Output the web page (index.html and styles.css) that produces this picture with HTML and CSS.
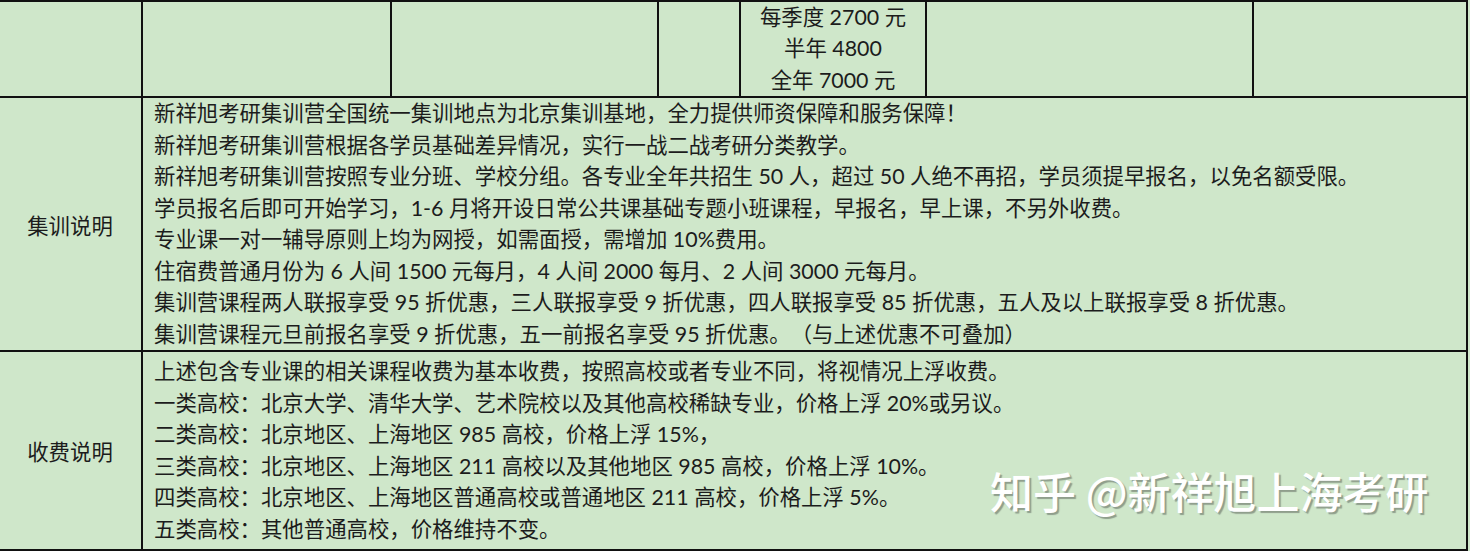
FILE: index.html
```html
<!DOCTYPE html>
<html lang="zh-CN">
<head>
<meta charset="utf-8">
<title>集训说明</title>
<link rel="stylesheet" href="styles.css">
</head>
<body>
<div class="page">
  <table class="fees">
    <colgroup>
      <col class="c1"><col class="c2"><col class="c3"><col class="c4"><col class="c5"><col class="c6"><col class="c7">
    </colgroup>
    <tr class="r-price">
      <td class="first"></td>
      <td></td>
      <td></td>
      <td></td>
      <td class="price"><div>每季度 2700 元</div><div>半年 4800</div><div>全年 7000 元</div></td>
      <td></td>
      <td></td>
    </tr>
    <tr class="r-info">
      <td class="first label">集训说明</td>
      <td colspan="6" class="lines">
        <div>新祥旭考研集训营全国统一集训地点为北京集训基地，全力提供师资保障和服务保障！</div>
        <div>新祥旭考研集训营根据各学员基础差异情况，实行一战二战考研分类教学。</div>
        <div>新祥旭考研集训营按照专业分班、学校分组。各专业全年共招生 50 人，超过 50 人绝不再招，学员须提早报名，以免名额受限。</div>
        <div>学员报名后即可开始学习，1-6 月将开设日常公共课基础专题小班课程，早报名，早上课，不另外收费。</div>
        <div>专业课一对一辅导原则上均为网授，如需面授，需增加 10%费用。</div>
        <div>住宿费普通月份为 6 人间 1500 元每月，4 人间 2000 每月、2 人间 3000 元每月。</div>
        <div>集训营课程两人联报享受 95 折优惠，三人联报享受 9 折优惠，四人联报享受 85 折优惠，五人及以上联报享受 8 折优惠。</div>
        <div>集训营课程元旦前报名享受 9 折优惠，五一前报名享受 95 折优惠。（与上述优惠不可叠加）</div>
      </td>
    </tr>
    <tr class="r-fee">
      <td class="first label">收费说明</td>
      <td colspan="6" class="lines">
        <div>上述包含专业课的相关课程收费为基本收费，按照高校或者专业不同，将视情况上浮收费。</div>
        <div>一类高校：北京大学、清华大学、艺术院校以及其他高校稀缺专业，价格上浮 20%或另议。</div>
        <div>二类高校：北京地区、上海地区 985 高校，价格上浮 15%，</div>
        <div>三类高校：北京地区、上海地区 211 高校以及其他地区 985 高校，价格上浮 10%。</div>
        <div>四类高校：北京地区、上海地区普通高校或普通地区 211 高校，价格上浮 5%。</div>
        <div>五类高校：其他普通高校，价格维持不变。</div>
      </td>
    </tr>
  </table>
  <div class="watermark">知乎 @新祥旭上海考研</div>
</div>
</body>
</html>
```

FILE: styles.css
```css
html, body {
  margin: 0;
  padding: 0;
  background: #cfe7ca;
}
.page {
  position: relative;
  width: 1470px;
  height: 551px;
  overflow: hidden;
  background: #cfe7ca;
}
.fees {
  border-collapse: collapse;
  table-layout: fixed;
  width: 1467px;
  margin-left: -1px;
  margin-top: 0;
  font-family: "Lato", "Noto Sans CJK SC", sans-serif;
  font-size: 21.4px;
  color: #1c1c1c;
  text-spacing-trim: space-all;
}
.c1 { width: 143px; }
.c2 { width: 249px; }
.c3 { width: 267px; }
.c4 { width: 82px; }
.c5 { width: 186px; }
.c6 { width: 327px; }
.c7 { width: 214px; }
.fees td {
  border: 2px solid #111;
  padding: 0;
  vertical-align: top;
  overflow: hidden;
}
.fees td.first {
  border-left: none;
}
.r-price td {
  height: 94px;
}
.price {
  text-align: center;
  line-height: 31.3px;
}
.r-info td {
  height: 252px;
}
.r-fee td {
  height: 193px;
}
.label {
  text-align: center;
  vertical-align: middle !important;
}
.lines {
  padding: 0 0 0 11px !important;
  line-height: 31.5px;
  white-space: nowrap;
}
.r-fee .lines {
  padding-top: 4px !important;
}
.watermark {
  position: absolute;
  left: 990px;
  top: 464px;
  font-family: "Noto Sans CJK SC", sans-serif;
  font-size: 43px;
  font-weight: 500;
  color: #ffffff;
  text-shadow: 2px 2px 1px #8f9e8c;
  white-space: nowrap;
  line-height: 52px;
}
```
